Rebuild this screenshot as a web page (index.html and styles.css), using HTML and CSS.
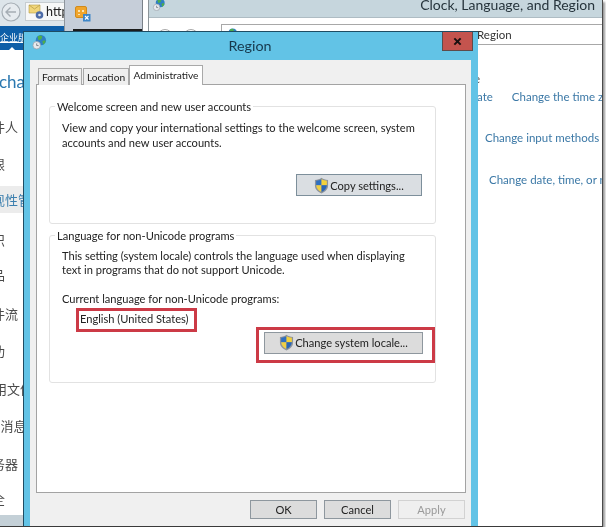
FILE: index.html
```html
<!DOCTYPE html>
<html lang="en">
<head>
<meta charset="utf-8">
<title>Region</title>
<link rel="stylesheet" href="styles.css">
</head>
<body>
<svg class="defs" width="0" height="0" aria-hidden="true">
  <defs>
    <symbol id="shield" viewBox="0 0 16 18">
      <path d="M8 .6C6 2 4 2.8 1 3v6.2c0 3.8 3 6.6 7 8.2 4-1.6 7-4.4 7-8.2V3C12 2.8 10 2 8 .6z" fill="#8d939b"/>
      <path d="M8 2C6.4 3 4.600 3.700 2.300 4v4.600H8z" fill="#2f6fc0"/>
      <path d="M8 2c1.600 1 3.400 1.700 5.700 2v4.600H8z" fill="#f2d13c"/>
      <path d="M2.300 8.600H8v7.300C5 14.500 2.600 12.200 2.300 8.600z" fill="#efcf45"/>
      <path d="M13.700 8.600H8v7.300c3-1.400 5.400-3.700 5.700-7.300z" fill="#2a66b6"/>
    </symbol>
    <symbol id="globe" viewBox="0 0 16 16">
      <circle cx="9.500" cy="6" r="5.500" fill="#2f7fc4"/>
      <path d="M6 2c2-1.500 4-1 5 0l-1 3-3 1zM11 7l3-1 .5 2-2.500 3z" fill="#4fae4a"/>
      <circle cx="5" cy="11.500" r="4" fill="#e8eaee" stroke="#9aa0a8" stroke-width=".8"/>
      <path d="M5 9.500v2.300h2" fill="none" stroke="#7a8088"/>
    </symbol>
  </defs>
</svg>

<div class="screen">
  <section class="win browser">
    <div class="browser-bar">
      <svg class="back" viewBox="0 0 20 20" aria-hidden="true">
        <circle cx="10" cy="10" r="9" fill="#e6ebef" stroke="#a5adb4" stroke-width="1.200"/>
        <path d="M15 10H5M9.500 5.500 5 10l4.500 4.500" fill="none" stroke="#a5adb4" stroke-width="1.400"/>
      </svg>
      <div class="url">
        <svg class="url-icon" viewBox="0 0 16 16" aria-hidden="true">
          <path d="M1 1h11v8H1z" fill="#f1d67a" stroke="#b39a45" stroke-width=".6"/>
          <path d="M1 1l5.500 4L12 1" fill="none" stroke="#b39a45" stroke-width=".7"/>
          <circle cx="11.500" cy="11" r="3.800" fill="#4d6ca8"/>
          <circle cx="11.500" cy="11" r="1.300" fill="#dfe6ee"/>
        </svg>
        <span>http</span>
      </div>
    </div>
    <div class="brand-bar"><span>企业版</span></div>
    <div class="page-title">cha</div>
    <ul class="side-menu">
      <li class="m1">件人</li>
      <li class="m2">限</li>
      <li class="m3 selected">现性管</li>
      <li class="m4">识</li>
      <li class="m5">品</li>
      <li class="m6">件流</li>
      <li class="m7">功</li>
      <li class="m8">用文件</li>
      <li class="m9">-消息</li>
      <li class="m10">务器</li>
      <li class="m11">全</li>
    </ul>
    <div class="browser-foot"></div>
  </section>

  <section class="win flyout">
    <svg class="flyout-icon" viewBox="0 0 16 16" aria-hidden="true">
      <rect x=".5" y=".5" width="11" height="11" rx="1.500" fill="#f0a52c" stroke="#d08a1c"/>
      <path d="M3 4h2v2H3zM7 4h2v2H7zM3 8h2v1H3z" fill="#fbe4b0"/>
      <rect x="8" y="8" width="7.500" height="7.500" fill="#3e86c8"/>
      <path d="M10 10l3.500 3.500M13.500 10 10 13.500" stroke="#fff" stroke-width="1.100"/>
    </svg>
    <div class="flyout-strip"></div>
  </section>

  <section class="win panel">
    <div class="panel-title">
      <svg class="panel-icon"><use href="#globe"/></svg>
      <span>Clock, Language, and Region</span>
    </div>
    <div class="panel-toolbar">
      <div class="nav-dots"><i></i><i></i></div>
      <div class="crumb">
        <svg class="crumb-icon"><use href="#globe"/></svg>
        <span class="crumb-text">Region</span>
      </div>
    </div>
    <div class="panel-body">
      <div class="stub">e</div>
      <div class="link-row l1"><a>ate</a><i class="sep"></i><a>Change the time zone</a></div>
      <a class="l2">Change input methods</a>
      <a class="l3">Change date, time, or number formats</a>
    </div>
  </section>

  <section class="win dialog">
    <header class="dialog-title">
      <svg class="dialog-icon"><use href="#globe"/></svg>
      <span>Region</span>
      <div class="close"><svg viewBox="0 0 10 10" aria-hidden="true"><path d="M1.500 1.500l7 7M8.500 1.500l-7 7" stroke="#1a1010" stroke-width="2.200"/></svg></div>
    </header>
    <div class="dialog-body">
      <div class="tabs">
        <div class="tab">Formats</div>
        <div class="tab loc">Location</div>
        <div class="tab active">Administrative</div>
      </div>
      <div class="tab-panel">
        <div class="group g1">
          <div class="legend">Welcome screen and new user accounts</div>
          <p class="para">View and copy your international settings to the welcome screen, system<br>accounts and new user accounts.</p>
          <div class="btn copy"><svg class="shield"><use href="#shield"/></svg>Copy settings...</div>
        </div>
        <div class="group g2">
          <div class="legend">Language for non-Unicode programs</div>
          <p class="para">This setting (system locale) controls the language used when displaying<br>text in programs that do not support Unicode.</p>
          <p class="para current">Current language for non-Unicode programs:</p>
          <div class="locale-row">
            <div class="mark mark-lang">English (United States)</div>
            <div class="mark mark-btn">
              <div class="btn locale"><svg class="shield"><use href="#shield"/></svg>Change system locale...</div>
            </div>
          </div>
        </div>
      </div>
      <footer class="actions">
        <div class="btn act">OK</div>
        <div class="btn act">Cancel</div>
        <div class="btn act off">Apply</div>
      </footer>
    </div>
  </section>
</div>
</body>
</html>
```
FILE: styles.css
```css
html, body {
  margin: 0;
  padding: 0;
  background: #fff;
}
.defs { position: absolute; }
.screen {
  position: relative;
  width: 602px;
  height: 526px;
  overflow: hidden;
  background: #fff;
  border-right: 1px solid #4a4a4a;
  border-bottom: 1px solid #3a3a3a;
  box-shadow: 2px 2px 2px #9a9a9a;
  font-family: Lato, "Noto Sans", sans-serif;
  font-size: 11.100px;
  color: #222;
  filter: blur(.35px);
}
.win { position: absolute; }

/* browser behind */
.browser {
  left: 0;
  top: 0;
  width: 66px;
  height: 526px;
  display: flex;
  flex-direction: column;
  overflow: hidden;
  background: #fff;
}
.browser-bar {
  height: 26px;
  flex: none;
  display: flex;
  align-items: flex-start;
  gap: 4px;
  padding: 2px 0 0 1px;
  box-sizing: border-box;
  background: #dde5ea;
}
.back { width: 20px; height: 20px; flex: none; }
.url {
  width: 60px;
  height: 19px;
  flex: none;
  display: flex;
  align-items: center;
  gap: 2px;
  padding-left: 2px;
  background: #f7f8f8;
  border: 1px solid #c6ccd0;
  box-sizing: border-box;
  font-size: 12.500px;
  color: #222;
}
.url-icon { width: 16px; height: 16px; flex: none; }
.brand-bar {
  position: relative;
  height: 24px;
  flex: none;
  background: #0d5ea8;
  color: #fff;
  font-family: "Noto Sans CJK SC", sans-serif;
  font-size: 9px;
  line-height: 14px;
  padding-top: 5px;
  box-sizing: border-box;
  text-decoration: underline;
  white-space: nowrap;
}
.brand-bar::after {
  content: "";
  position: absolute;
  left: 9px;
  bottom: 0;
  border: 3px solid transparent;
  border-top: 0;
  border-bottom-color: #fff;
}
.page-title {
  height: 24px;
  flex: none;
  margin-top: 20px;
  margin-left: -1px;
  font-size: 17px;
  line-height: 24px;
  color: #2a78b0;
}
.side-menu {
  list-style: none;
  margin: 0;
  padding: 0;
  font-family: "Noto Sans CJK SC", sans-serif;
  font-size: 13px;
  line-height: 20px;
  color: #4a4a4a;
  white-space: nowrap;
  flex: 1;
}
.side-menu li { height: 20px; text-indent: -8px; }
.m1 { margin-top: 23px; }
.m2 { margin-top: 17px; }
.side-menu .m3 { margin-top: 12px; height: 27px; line-height: 27px; background: #ececec; color: #3c7fae; }
.m4 { margin-top: 17px; }
.m5 { margin-top: 15px; }
.m6 { margin-top: 19px; }
.m7 { margin-top: 17px; }
.side-menu .m8 { margin-top: 18px; text-indent: -6px; }
.side-menu .m9 { margin-top: 17px; text-indent: -4px; }
.m10 { margin-top: 18px; }
.m11 { margin-top: 15px; }
.browser-foot {
  height: 11px;
  flex: none;
  background: #c4d0d7;
}

/* flyout */
.flyout {
  left: 64px;
  top: 0;
  width: 79px;
  height: 31px;
  display: flex;
  flex-direction: column;
  justify-content: space-between;
  background: #c6ced9;
  border-left: 1px solid #8e959c;
  border-right: 1px solid #7a8189;
  box-sizing: border-box;
}
.flyout-icon {
  display: block;
  width: 16px;
  height: 16px;
  margin: 6px 0 0 10px;
}
.flyout-strip {
  height: 2px;
  margin-left: 8px;
  background: #1c1c1c;
}

/* control panel */
.panel {
  left: 148px;
  top: 0;
  width: 454px;
  height: 526px;
  display: flex;
  flex-direction: column;
  overflow: hidden;
  background: #fff;
  border-left: 1px solid #8c9499;
  box-sizing: border-box;
}
.panel-title {
  height: 18px;
  flex: none;
  display: flex;
  justify-content: space-between;
  padding: 0 7px 0 3px;
  background: #c6d6dd;
  border-bottom: 1px solid #aebcc3;
  box-sizing: border-box;
  font-size: 14px;
  line-height: 14px;
  color: #26343c;
  white-space: nowrap;
}
.panel-title span { margin-top: -2px; }
.panel-icon { width: 14px; height: 13px; margin-top: -2px; }
.panel-toolbar {
  height: 27px;
  flex: none;
  display: flex;
  align-items: flex-end;
  gap: 22px;
  padding-left: 8px;
  box-sizing: border-box;
}
.nav-dots { display: flex; gap: 10px; }
.nav-dots i {
  width: 16px;
  height: 16px;
  border: 1px solid #aaa;
  border-radius: 50%;
  box-sizing: border-box;
}
.crumb {
  flex: 1;
  height: 21px;
  display: flex;
  align-items: center;
  gap: 215px;
  padding-left: 3px;
  border: 1px solid #a8a8a8;
  border-right: 0;
  box-sizing: border-box;
  font-size: 11.500px;
  color: #333;
  white-space: nowrap;
}
.crumb-icon { width: 13px; height: 13px; flex: none; }
.crumb-text { margin-left: 24px; }
.panel-body {
  flex: 1;
  display: flex;
  flex-direction: column;
  font-size: 11.500px;
  white-space: nowrap;
  color: #3b78a6;
}
.stub { margin: 26px 0 0 325px; height: 16px; line-height: 16px; color: #444; }
.link-row { display: flex; align-items: center; height: 18px; margin: 0 0 0 328px; }
.sep { width: 1px; height: 12px; margin: 0 10px 0 9px; background: #c8c8c8; }
.l2 { margin: 24px 0 0 336px; line-height: 18px; }
.l3 { margin: 24px 0 0 340px; line-height: 18px; }

/* dialog */
.dialog {
  left: 23px;
  top: 31px;
  width: 455px;
  height: 495px;
  display: flex;
  flex-direction: column;
  background: #62c3e6;
  border-left: 1px solid #1f4c63;
  border-top: 1px solid #1f4c63;
  box-sizing: border-box;
}
.dialog-title {
  position: relative;
  height: 28px;
  flex: none;
  display: flex;
  align-items: center;
  justify-content: center;
  padding: 0 2px 2px 0;
  box-sizing: border-box;
  font-size: 14.300px;
  color: #16384c;
}
.dialog-icon {
  position: absolute;
  left: 8px;
  top: 2px;
  width: 15px;
  height: 16px;
}
.close {
  position: absolute;
  left: 418px;
  top: 0;
  width: 31px;
  height: 19px;
  display: flex;
  align-items: center;
  justify-content: center;
  background: #c4544e;
  border: 1px solid #5f4b4b;
  border-top: 0;
  box-sizing: border-box;
}
.close svg { width: 9px; height: 9px; }
.dialog-body {
  flex: 1;
  width: 441px;
  margin-left: 6px;
  padding: 6px 0 0 6px;
  box-sizing: border-box;
  display: flex;
  flex-direction: column;
  background: #f0f0f0;
}
.tabs {
  height: 19px;
  flex: none;
  display: flex;
  align-items: flex-end;
  padding-left: 2px;
  position: relative;
  z-index: 1;
  margin-bottom: -1px;
}
.tab {
  height: 17px;
  width: 44px;
  box-sizing: border-box;
  border: 1px solid #a9a9a9;
  border-bottom: 0;
  margin-right: 1px;
  line-height: 17px;
  text-align: center;
  font-size: 10.200px;
  background: #efefef;
}
.tab.loc { width: 46px; margin-right: 0; }
.tab.active {
  width: 74px;
  height: 20px;
  background: #fff;
  line-height: 18px;
  margin-right: 0;
}
.tab-panel {
  width: 430px;
  height: 409px;
  flex: none;
  box-sizing: border-box;
  padding: 21px 0 0 12px;
  background: #fff;
  border: 1px solid #a3a3a3;
}
.group {
  position: relative;
  width: 387px;
  box-sizing: border-box;
  border: 1px solid #e2e2e2;
  border-radius: 3px;
  padding: 13px 0 0 12px;
}
.g1 { height: 118px; margin-bottom: 11px; }
.g2 { height: 148px; }
.legend {
  position: absolute;
  left: 5px;
  top: -8px;
  padding: 0 2px;
  background: #fff;
  line-height: 15px;
  white-space: nowrap;
}
.para {
  margin: 0;
  line-height: 15px;
  white-space: nowrap;
}
.g2 .para { line-height: 13.500px; }
.g2 .current { margin-top: 16px; }
.btn {
  display: flex;
  align-items: center;
  justify-content: center;
  box-sizing: border-box;
  background: #dcdcdc;
  border: 1px solid #8e979e;
  white-space: nowrap;
  color: #222;
}
.shield { width: 15px; height: 17px; flex: none; margin-right: 1px; }
.copy {
  width: 126px;
  height: 22px;
  margin: 24px 0 0 234px;
  background: #dadee2;
  border-color: #7d8f9b;
}
.locale-row {
  display: grid;
  grid-template-columns: 121px 179px;
  column-gap: 59px;
  margin: 2px 0 0 14px;
}
.mark {
  border: 3px solid #cc3a46;
  box-sizing: border-box;
}
.mark-lang {
  height: 24px;
  padding-left: 1px;
  line-height: 15px;
  white-space: nowrap;
}
.mark-btn {
  height: 36px;
  margin-top: 19px;
  padding: 2px 0 0 5px;
}
.locale {
  width: 159px;
  height: 22px;
}
.actions {
  height: 33px;
  flex: none;
  width: 430px;
  box-sizing: border-box;
  display: flex;
  justify-content: flex-end;
  gap: 7px;
  padding: 7px 1px 0 0;
}
.act {
  width: 67px;
  height: 19px;
}
.off {
  background: #efefef;
  border-color: #d2d2d2;
  color: #9a9a9a;
}
```
